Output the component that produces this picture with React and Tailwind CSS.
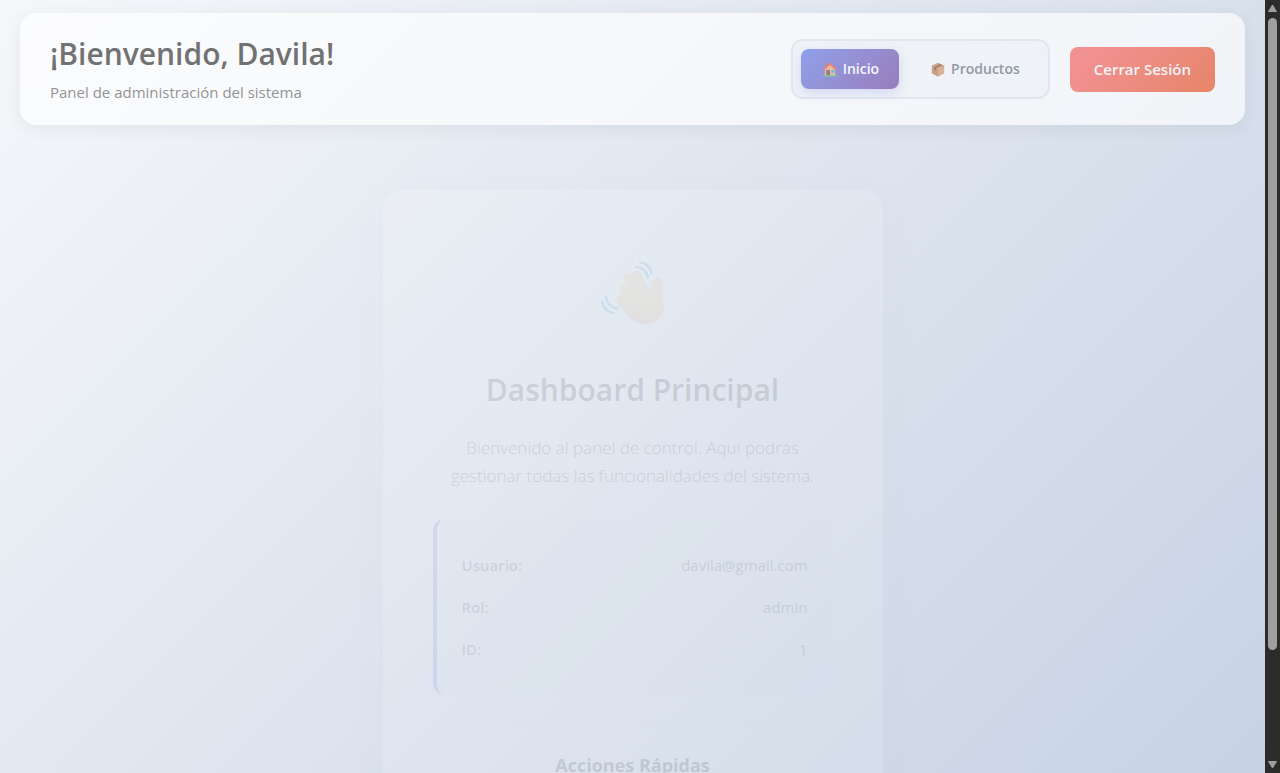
function HouseIcon() {
  return (
    <svg viewBox="0 0 32 32" className="h-[15px] w-[18px]" aria-hidden="true">
      <rect x="1" y="27" width="30" height="4" rx="1.5" fill="#3fc06a" />
      <rect x="7" y="3" width="4" height="9" fill="#c9503c" />
      <path d="M5 15 16 4l11 11v13H5z" fill="#e8a67c" />
      <path d="M16 1 1 15.500l2.500 2.500L16 6.500 28.500 18l2.500-2.500z" fill="#e8573f" />
      <rect x="8" y="17" width="8" height="11" fill="#7a4a42" />
      <rect x="19" y="17" width="6" height="6" fill="#2fa8e8" />
    </svg>
  );
}

function BoxIcon() {
  return (
    <svg viewBox="0 0 32 32" className="h-[15px] w-[18px]" aria-hidden="true">
      <path d="M16 2 29 8v16l-13 7L3 24V8z" fill="#b87a50" />
      <path d="M16 2 29 8l-13 6L3 8z" fill="#c98655" />
      <path d="M3 8l13 6v17L3 24z" fill="#c07c4e" />
      <path d="M16 14l13-6v16l-13 7z" fill="#d69a6c" />
      <path d="M21 4.500 8.500 10.500v6l3.500 2v-6L25 6.500z" fill="#7c4a33" />
    </svg>
  );
}

function WaveIcon() {
  return (
    <svg viewBox="0 0 64 64" className="h-16 w-16" aria-hidden="true">
      <defs>
        <linearGradient id="skin" gradientUnits="userSpaceOnUse" x1="46" y1="16" x2="36" y2="62">
          <stop offset="0" stopColor="#fbdc84" />
          <stop offset="0.65" stopColor="#fbd37c" />
          <stop offset="1" stopColor="#f5a890" />
        </linearGradient>
      </defs>
      <g fill="none" stroke="#3ba0e6" strokeWidth="2.200" strokeLinecap="round">
        <path d="M39 1.500c6 0 10.500 5 11.500 11" />
        <path d="M35 6c6 0 11.500 5 12 11" />
        <path d="M1.200 40c0 6 5 11 11 12" />
        <path d="M5 35c0 6 5 12 11.500 12.500" />
      </g>
      <g fill="none" stroke="url(#skin)" strokeWidth="9" strokeLinecap="round">
        <path d="M36 14l9 20" />
        <path d="M27.500 17l11 20" />
        <path d="M22.500 27.500l12 17" />
        <path d="M19.500 39l12 11" />
      </g>
      <path
        d="M16.500 43c8 8 15 20 27.500 20 11 0 19-7 19-18 0-5-2.500-10-2-16l.500-7c0-7-8.500-7.500-10-1L49 32 38 26 28 33l-4 7z"
        fill="url(#skin)"
      />
      <g fill="none" stroke="#e8a04c" strokeWidth="1.500" strokeLinecap="round" opacity="0.4">
        <path d="M32 17l8 14" />
        <path d="M25 27l8 11" />
        <path d="M21 37l8 9" />
        <path d="M46 27l3 5" />
      </g>
    </svg>
  );
}

function Header() {
  return (
    <header className="flex items-center justify-between gap-5 rounded-2xl bg-white px-[30px] py-5 opacity-67 shadow-[0_4px_15px_rgba(0,0,0,0.08)]">
      <div>
        <h1 className="text-[30px] leading-[42px] font-semibold text-[#333]">¡Bienvenido, Davila!</h1>
        <p className="mt-1 text-[15px] leading-[26px] text-[#666]">Panel de administración del sistema</p>
      </div>
      <div className="flex items-center gap-5">
        <nav className="flex gap-2.5 rounded-xl border-2 border-[#e4e8ed] bg-[#f8f9fa] p-2 text-sm font-semibold">
          <button
            type="button"
            className="flex h-10 items-center gap-1 rounded-lg bg-linear-135 from-[#667eea] to-[#764ba2] px-5 text-white shadow-[0_4px_12px_rgba(102,126,234,0.3)]"
          >
            <HouseIcon />
            Inicio
          </button>
          <button type="button" className="flex h-10 items-center gap-1 rounded-lg px-5 text-[#6c757d]">
            <BoxIcon />
            Productos
          </button>
        </nav>
        <button
          type="button"
          className="rounded-lg bg-linear-135 from-[#ff6b6b] to-[#ee5a24] px-6 text-[15px] leading-[45px] font-semibold text-white"
        >
          Cerrar Sesión
        </button>
      </div>
    </header>
  );
}

const details = [
  ["Usuario:", "davila@gmail.com"],
  ["Rol:", "admin"],
  ["ID:", "1"],
];

function DashboardCard() {
  return (
    <main className="mx-auto mt-[65px] flex w-full max-w-[500px] flex-col rounded-[20px] bg-white p-[50px] text-center opacity-12 shadow-[0_10px_30px_rgba(0,0,0,0.08)]">
      <div className="flex h-[106px] items-center justify-center">
        <WaveIcon />
      </div>
      <h2 className="mt-[22px] text-[30px] leading-[44px] font-semibold text-[#333]">Dashboard Principal</h2>
      <p className="mt-[22px] text-[17px] leading-7 font-light text-[#333]">
        Bienvenido al panel de control. Aquí podrás gestionar todas las funcionalidades del sistema.
      </p>
      <dl className="mt-[29px] rounded-xl border-l-4 border-[#667eea] bg-[#f8f9fa] p-[25px] text-[15px]">
        {details.map(([label, value]) => (
          <div key={label} className="flex h-[42px] items-center justify-between">
            <dt className="font-semibold text-[#555]">{label}</dt>
            <dd className="text-[#555]">{value}</dd>
          </div>
        ))}
      </dl>
      <section className="mt-[30px] border-t-2 border-[#f4f5f7] pt-6 pb-24">
        <h3 className="text-lg leading-7 font-bold text-[#333]">Acciones Rápidas</h3>
      </section>
    </main>
  );
}

function Scrollbar() {
  return (
    <div className="flex w-[15px] shrink-0 flex-col items-center justify-between bg-[#2c2c2c] py-1" aria-hidden="true">
      <svg viewBox="0 0 9 8" className="h-2 w-[9px]">
        <path d="M4.500 1 8.500 7.500h-8z" fill="#9f9f9f" stroke="#9f9f9f" strokeLinejoin="round" />
      </svg>
      <div className="mt-1.5 flex-1 self-stretch px-[3px]">
        <div className="h-[85%] rounded-full bg-[#9f9f9f]" />
      </div>
      <svg viewBox="0 0 9 8" className="h-2 w-[9px]">
        <path d="M4.500 7 .5.500h8z" fill="#9f9f9f" stroke="#9f9f9f" strokeLinejoin="round" />
      </svg>
    </div>
  );
}

export default function App() {
  return (
    <div className="flex h-screen overflow-hidden font-['Open_Sans','Noto_Sans',sans-serif]">
      <div className="min-w-0 flex-1 overflow-hidden">
        <div className="min-h-full bg-linear-135 from-[#f5f7fa] to-[#c3cfe2] px-5 pt-[13px] pb-5">
          <Header />
          <DashboardCard />
        </div>
      </div>
      <Scrollbar />
    </div>
  );
}
